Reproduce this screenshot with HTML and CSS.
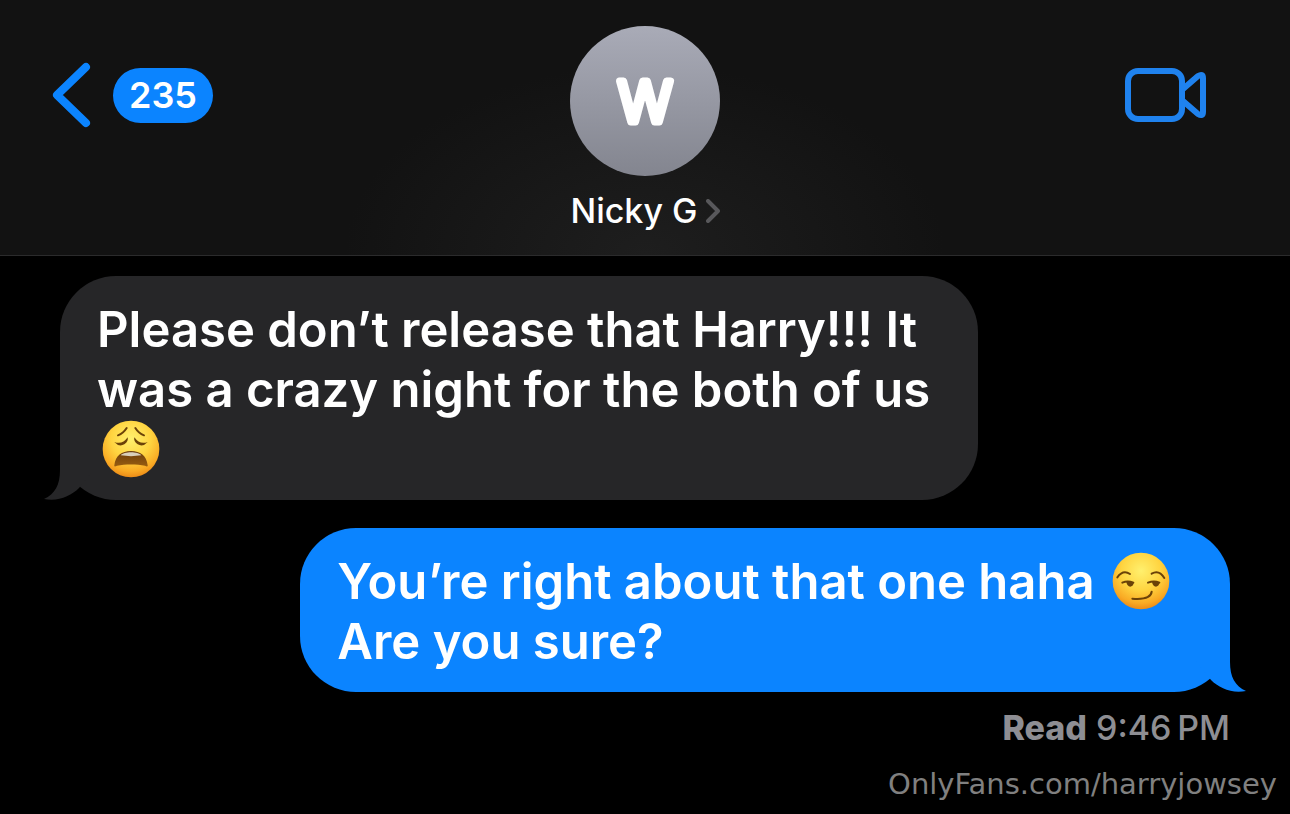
FILE: index.html
```html
<!DOCTYPE html>
<html lang="en">
<head>
  <meta charset="UTF-8" />
  <meta name="viewport" content="width=device-width, initial-scale=1.0" />
  <title>Nicky G</title>
  <link rel="stylesheet" href="styles.css">
</head>
<body>
  <header>
    <button class="back" type="button" aria-label="Back, 235 unread">
      <svg class="back-arrow" viewBox="0 0 40 66" aria-hidden="true">
        <path d="M34 5 L5 33 L34 61" />
      </svg>
      <span class="badge">235</span>
    </button>
    <a class="contact" href="#contact">
      <svg class="avatar" viewBox="0 0 150 150">
        <text x="75" y="96" text-anchor="middle">W</text>
      </svg>
      <span class="name">Nicky G
        <svg class="chevron" viewBox="0 0 14 24" aria-hidden="true">
          <path d="M2 2 L12 12 L2 22" />
        </svg>
      </span>
    </a>
    <button class="video" type="button" aria-label="Video call">
      <svg viewBox="0 0 82 54" aria-hidden="true">
        <rect x="3" y="3" width="54" height="48" rx="10" />
        <path d="M58 21 L73 8 Q78 5 78 10 V44 Q78 49 73 46 L58 33" />
      </svg>
    </button>
  </header>

  <main>
    <div class="bubble received">
      Please don’t release that Harry!!! It was a crazy night for the both of us
      <svg class="emoji" viewBox="213 28 174 174" role="img" aria-label="Weary face">
        <defs>
          <radialGradient id="face" cx="50%" cy="32%" r="70%">
            <stop offset="0" stop-color="#fff06e" />
            <stop offset="0.5" stop-color="#ffd440" />
            <stop offset="0.82" stop-color="#f9aa24" />
            <stop offset="1" stop-color="#e98515" />
          </radialGradient>
          <linearGradient id="mouth" x1="0" y1="0" x2="0" y2="1">
            <stop offset="0" stop-color="#6a3b0c" />
            <stop offset="1" stop-color="#985d10" />
          </linearGradient>
        </defs>
        <circle cx="300" cy="115" r="85" fill="url(#face)" />
        <g fill="none" stroke="#6b4208" stroke-width="6" stroke-linecap="round">
          <path d="M261 74 Q277 68 287 52" />
          <path d="M339 74 Q323 68 313 52" />
        </g>
        <g fill="#6b4208">
          <path d="M250 94 Q274 103 290 80 Q293 92 280 101 Q264 110 250 94Z" />
          <path d="M350 94 Q326 103 310 80 Q307 92 320 101 Q336 110 350 94Z" />
        </g>
        <path d="M250 164 C253 135 272 121 300 121 C328 121 347 135 350 164 C351 169 346 168 342 165 C318 160 282 160 258 165 C253 168 249 169 250 164Z" fill="url(#mouth)" />
        <path d="M269 134 C279 122 321 122 331 134 Q300 139 269 134Z" fill="#d9cfbc" />
      </svg>
      <svg class="tail" viewBox="0 0 50 61" aria-hidden="true">
        <path d="M16 0 V31 C16 46 11 55 0 60 C14 63 27 57 35 49 L50 30 V0Z" />
      </svg>
    </div>

    <div class="bubble sent">
      You’re right about that one haha
      <svg class="emoji" viewBox="51 65 174 174" role="img" aria-label="Smirking face">
        <circle cx="138" cy="152" r="85" fill="url(#face)" />
        <g fill="none" stroke="#6b4208" stroke-width="6" stroke-linecap="round">
          <path d="M67 141 Q84 117 105 131" />
          <path d="M170 130 Q192 117 208 143" />
          <path d="M112 205 C137 207 168 206 170 184" />
          <path d="M82 157 Q98 150 115 157" />
          <path d="M159 157 Q177 150 193 157" />
        </g>
        <g fill="#6b4208">
          <path d="M94 154 L115 156 Q117 167 106 169 Q96 168 94 154Z" />
          <path d="M171 154 L192 156 Q194 167 183 169 Q173 168 171 154Z" />
        </g>
      </svg>
      <br>
      Are you sure?
      <svg class="tail" viewBox="0 0 50 61" aria-hidden="true">
        <path d="M16 0 V31 C16 46 11 55 0 60 C14 63 27 57 35 49 L50 30 V0Z" />
      </svg>
    </div>
    <p class="receipt"><b>Read</b> 9:46&#8198;PM</p>
  </main>

  <footer>OnlyFans.com/harryjowsey</footer>
</body>
</html>
```
FILE: styles.css
```css
body {
  margin: 0;
  min-height: 100vh;
  display: flex;
  flex-direction: column;
  background: #000;
  color: #fff;
  font-family: Inter, "Liberation Sans", sans-serif;
}
button {
  border: 0;
  padding: 0;
  background: none;
  color: inherit;
  font: inherit;
  cursor: pointer;
}
header {
  display: grid;
  grid-template-columns: 1fr auto 1fr;
  align-items: start;
  padding: 26px 52px 24px;
  border-bottom: 1px solid #2b2b2c;
  background: radial-gradient(ellipse 300px 190px at 50% 100%, #1e1e1e, #121212);
}
.back {
  display: flex;
  align-items: center;
  gap: 21px;
  justify-self: start;
  margin-top: 36px;
}
.back-arrow {
  width: 40px;
  height: 66px;
  fill: none;
  stroke: #0b84ff;
  stroke-width: 8;
  stroke-linecap: round;
  stroke-linejoin: round;
}
.badge {
  padding: 0 16px;
  border-radius: 28px;
  background: #0b84ff;
  font-size: 36px;
  font-weight: 600;
  line-height: 55px;
}
.contact {
  display: flex;
  flex-direction: column;
  align-items: center;
  gap: 15px;
  color: #fff;
  text-decoration: none;
}
.avatar {
  width: 150px;
  height: 150px;
  border-radius: 50%;
  background: linear-gradient(#a9abb7, #83858f);
}
.avatar text {
  fill: #fff;
  stroke: #fff;
  stroke-width: 7;
  stroke-linejoin: round;
  font-size: 56px;
  font-weight: 300;
}
.name {
  display: flex;
  align-items: center;
  gap: 8px;
  font-size: 34px;
  font-weight: 500;
  line-height: 40px;
}
.chevron {
  width: 14px;
  height: 24px;
  fill: none;
  stroke: #58585b;
  stroke-width: 4;
  stroke-linecap: round;
  stroke-linejoin: round;
}
.video {
  justify-self: end;
  margin: 42px 31px 0 0;
}
.video svg {
  display: block;
  width: 82px;
  height: 54px;
  fill: none;
  stroke: #1f82ee;
  stroke-width: 6;
  stroke-linejoin: round;
}
main {
  display: flex;
  flex-direction: column;
  align-items: flex-start;
  padding: 20px 60px 0;
}
.bubble {
  position: relative;
  box-sizing: border-box;
  padding: 24px 37px 20px;
  border-radius: 56px;
  font-size: 49px;
  font-weight: 600;
  line-height: 60px;
}
.received {
  max-width: 918px;
  background: #262628;
  color: #fff;
}
.sent {
  align-self: flex-end;
  margin-top: 28px;
  padding-right: 55px;
  background: #0b84ff;
}
.emoji {
  width: 58px;
  height: 58px;
  margin: 0 5px;
  vertical-align: top;
}
.tail {
  position: absolute;
  bottom: 0;
  left: -16px;
  width: 50px;
  height: 61px;
  fill: #262628;
}
.sent .tail {
  left: auto;
  right: -16px;
  fill: #0b84ff;
  transform: scaleX(-1);
}
.receipt {
  align-self: flex-end;
  margin: 16px 0 0;
  color: #8e8e93;
  font-size: 34px;
  font-weight: 500;
  line-height: 40px;
}
.receipt b {
  font-weight: 800;
}
footer {
  margin-top: auto;
  padding: 0 13px 12px;
  color: #808080;
  font-family: "DejaVu Sans", sans-serif;
  font-size: 29px;
  line-height: 36px;
  text-align: right;
}
```
